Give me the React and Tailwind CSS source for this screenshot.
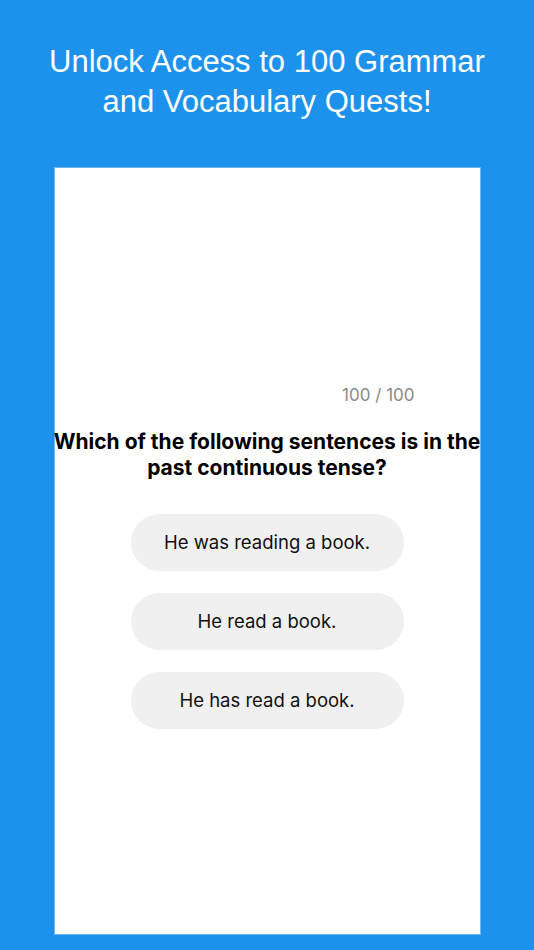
import React from 'react';

const options = ['He was reading a book.', 'He read a book.', 'He has read a book.'];

export default function App() {
  return (
    <div className="w-[534px] h-[950px] bg-[#1d92ed] flex flex-col items-center overflow-hidden">
      <h1
        className="mt-[42px] text-white text-[31px] leading-[40px] text-center"
        style={{ fontFamily: '"Liberation Sans", Arial, sans-serif' }}
      >
        Unlock Access to 100 Grammar
        <br />
        and Vocabulary Quests!
      </h1>

      <div
        className="mt-[45px] w-[427px] h-[768px] bg-white border border-[#6cb8f3] flex flex-col items-center"
        style={{ fontFamily: 'Inter, "Noto Sans", sans-serif' }}
      >
        <div className="mt-[215px] w-full pr-[65px] text-right text-[17px] text-[#8a8a8a] leading-[24px]">
          100 / 100
        </div>

        <p className="mt-[22px] text-[21px] font-bold leading-[26px] text-black text-center whitespace-nowrap">
          Which of the following sentences is in the
          <br />
          past continuous tense?
        </p>

        <div className="mt-[33px] flex flex-col gap-[22px]">
          {options.map(o => (
            <button
              key={o}
              className="w-[273px] h-[57px] rounded-full bg-[#f0f0f0] text-[18.5px] text-[#111]"
            >
              {o}
            </button>
          ))}
        </div>
      </div>
    </div>
  );
}
